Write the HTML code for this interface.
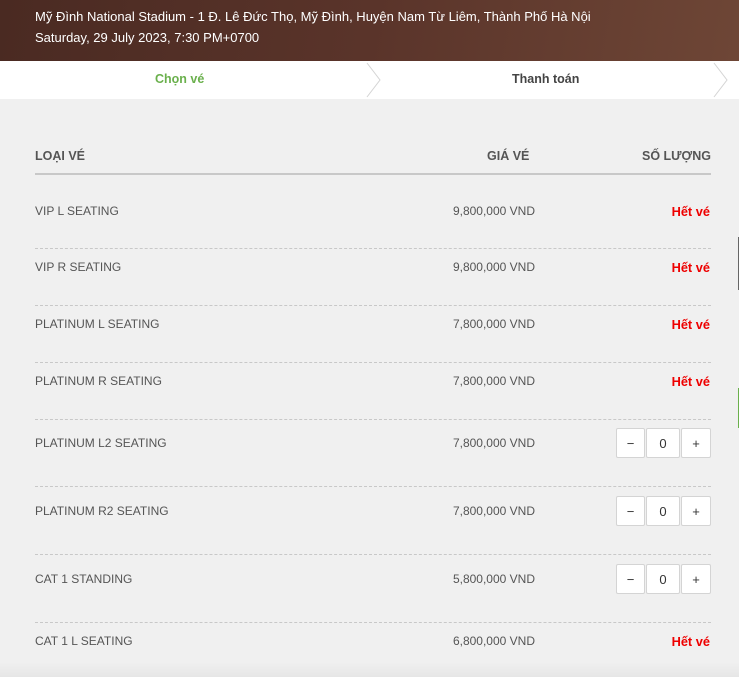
<!DOCTYPE html>
<html><head><meta charset="utf-8"><style>
*{margin:0;padding:0;box-sizing:border-box}
body{width:739px;height:677px;overflow:hidden;background:#f0f0f0;font-family:"Liberation Sans",sans-serif;position:relative;color:#555}
.hdr{position:absolute;left:0;top:0;width:739px;height:61px;background:linear-gradient(100deg,#4a2a22 0%,#5a342a 50%,#6e4636 100%);color:#fff;font-size:13px}
.hdr div{position:absolute;left:35px}
.tabs{position:absolute;left:0;top:61px;width:739px;height:38px;background:#fff;font-size:12.5px;font-weight:bold}
.t{position:absolute;top:11px}
.ab{position:absolute;top:0}
.a{position:absolute;font-size:12px}
.h{font-weight:bold;color:#555;font-size:12.5px}
.line{position:absolute;left:35px;width:676px;border-top:1px dashed #c8c8c8}
.r{position:absolute;right:29px;color:#e00;font-weight:bold;font-size:12.8px}
.p{position:absolute;right:204px;font-size:12px}
.st{position:absolute;left:616px;width:95px;height:30px;display:flex;gap:1px}
.st div{background:#fff;border:1px solid #d4d4d4;border-radius:2px;display:flex;align-items:center;justify-content:center;font-size:13px;color:#333}
</style></head><body>
<div class="hdr"><div style="top:9px">Mỹ Đình National Stadium - 1 Đ. Lê Đức Thọ, Mỹ Đình, Huyện Nam Từ Liêm, Thành Phố Hà Nội</div><div style="top:30px">Saturday, 29 July 2023, 7:30 PM+0700</div></div>
<div class="tabs">
<div class="t" style="left:155px;color:#6ab04c">Chọn vé</div>
<div class="t" style="left:512px;color:#444">Thanh toán</div>
<svg class="ab" style="left:365px" width="18" height="38"><path d="M2 2 L15 19 L2 36" fill="none" stroke="#d4d4d4"/></svg>
<svg class="ab" style="left:712px" width="18" height="38"><path d="M2 2 L15 19 L2 36" fill="none" stroke="#d4d4d4"/></svg>
</div>
<div class="a h" style="left:35px;top:149px">LOẠI VÉ</div>
<div class="a h" style="left:487px;top:149px">GIÁ VÉ</div>
<div class="a h" style="left:642px;top:149px">SỐ LƯỢNG</div>
<div style="position:absolute;left:35px;top:173px;width:676px;height:2px;background:#c8c8c8"></div>

<div class="a" style="left:35px;top:204px">VIP L SEATING</div><div class="p" style="top:204px">9,800,000 VND</div><div class="r" style="top:204px">Hết vé</div>
<div class="line" style="top:248px"></div>
<div class="a" style="left:35px;top:260px">VIP R SEATING</div><div class="p" style="top:260px">9,800,000 VND</div><div class="r" style="top:260px">Hết vé</div>
<div class="line" style="top:305px"></div>
<div class="a" style="left:35px;top:317px">PLATINUM L SEATING</div><div class="p" style="top:317px">7,800,000 VND</div><div class="r" style="top:317px">Hết vé</div>
<div class="line" style="top:362px"></div>
<div class="a" style="left:35px;top:374px">PLATINUM R SEATING</div><div class="p" style="top:374px">7,800,000 VND</div><div class="r" style="top:374px">Hết vé</div>
<div class="line" style="top:419px"></div>
<div class="a" style="left:35px;top:436px">PLATINUM L2 SEATING</div><div class="p" style="top:436px">7,800,000 VND</div>
<div class="st" style="top:428px"><div style="width:29px">−</div><div style="width:34px">0</div><div style="width:30px">+</div></div>
<div class="line" style="top:486px"></div>
<div class="a" style="left:35px;top:504px">PLATINUM R2 SEATING</div><div class="p" style="top:504px">7,800,000 VND</div>
<div class="st" style="top:496px"><div style="width:29px">−</div><div style="width:34px">0</div><div style="width:30px">+</div></div>
<div class="line" style="top:554px"></div>
<div class="a" style="left:35px;top:572px">CAT 1 STANDING</div><div class="p" style="top:572px">5,800,000 VND</div>
<div class="st" style="top:564px"><div style="width:29px">−</div><div style="width:34px">0</div><div style="width:30px">+</div></div>
<div class="line" style="top:622px"></div>
<div class="a" style="left:35px;top:634px">CAT 1 L SEATING</div><div class="p" style="top:634px">6,800,000 VND</div><div class="r" style="top:634px">Hết vé</div>
<div style="position:absolute;left:0;top:662px;width:739px;height:15px;background:linear-gradient(#f0f0f0,#e6e6e6)"></div>
<div style="position:absolute;left:738px;top:237px;width:1px;height:53px;background:#666"></div>
<div style="position:absolute;left:738px;top:388px;width:1px;height:40px;background:#6ab04c"></div>
</body></html>
